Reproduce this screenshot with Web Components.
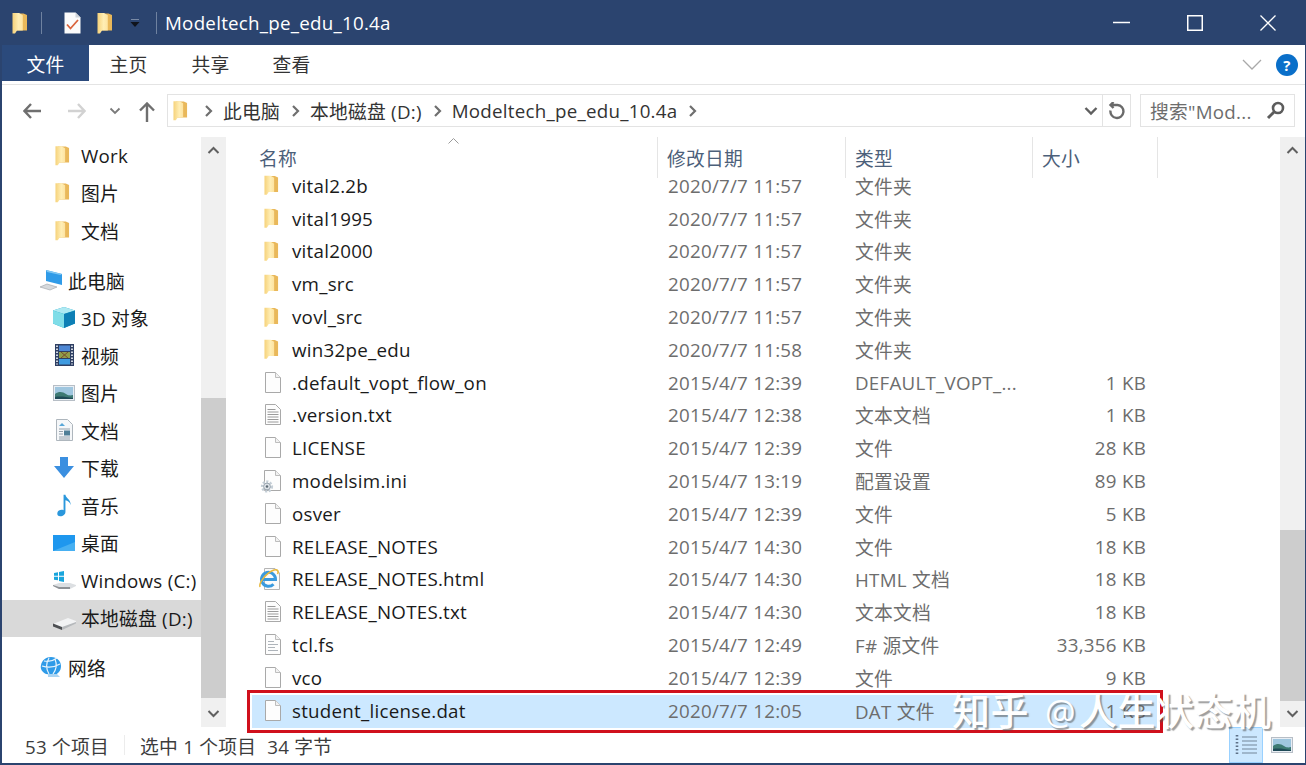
<!DOCTYPE html>
<html lang="zh">
<head>
<meta charset="utf-8">
<title>Modeltech_pe_edu_10.4a</title>
<style>
  html, body { margin: 0; height: 100%; background: #fff; }
  body { font: 18.75px "Open Sans", "Noto Sans CJK SC", sans-serif; letter-spacing: .25px; color: #1a1a1a; overflow: hidden; }
</style>
</head>
<body>
<fx-window>
  <fx-titlebar>Modeltech_pe_edu_10.4a</fx-titlebar>
  <fx-ribbon></fx-ribbon>
  <fx-address></fx-address>
  <fx-main>
    <fx-nav slot="nav">
      <fx-nav-item icon="folder" level="2">Work</fx-nav-item>
      <fx-nav-item icon="folder" level="2">图片</fx-nav-item>
      <fx-nav-item icon="folder" level="2">文档</fx-nav-item>
      <fx-nav-item icon="pc" level="1" gap>此电脑</fx-nav-item>
      <fx-nav-item icon="cube" level="2">3D 对象</fx-nav-item>
      <fx-nav-item icon="film" level="2">视频</fx-nav-item>
      <fx-nav-item icon="picture" level="2">图片</fx-nav-item>
      <fx-nav-item icon="document" level="2">文档</fx-nav-item>
      <fx-nav-item icon="download" level="2">下载</fx-nav-item>
      <fx-nav-item icon="music" level="2">音乐</fx-nav-item>
      <fx-nav-item icon="desktop" level="2">桌面</fx-nav-item>
      <fx-nav-item icon="windrive" level="2">Windows (C:)</fx-nav-item>
      <fx-nav-item icon="drive" level="2" selected>本地磁盘 (D:)</fx-nav-item>
      <fx-nav-item icon="network" level="1" gap>网络</fx-nav-item>
    </fx-nav>
    <fx-scrollbar slot="nav-scroll" before="235" thumb="300" after="0"></fx-scrollbar>
    <fx-list slot="list">
      <fx-file-row icon="folder" date="2020/7/7 11:57" type="文件夹">vital2.2b</fx-file-row>
      <fx-file-row icon="folder" date="2020/7/7 11:57" type="文件夹">vital1995</fx-file-row>
      <fx-file-row icon="folder" date="2020/7/7 11:57" type="文件夹">vital2000</fx-file-row>
      <fx-file-row icon="folder" date="2020/7/7 11:57" type="文件夹">vm_src</fx-file-row>
      <fx-file-row icon="folder" date="2020/7/7 11:57" type="文件夹">vovl_src</fx-file-row>
      <fx-file-row icon="folder" date="2020/7/7 11:58" type="文件夹">win32pe_edu</fx-file-row>
      <fx-file-row icon="file" date="2015/4/7 12:39" type="DEFAULT_VOPT_..." size="1 KB">.default_vopt_flow_on</fx-file-row>
      <fx-file-row icon="text" date="2015/4/7 12:38" type="文本文档" size="1 KB">.version.txt</fx-file-row>
      <fx-file-row icon="file" date="2015/4/7 12:39" type="文件" size="28 KB">LICENSE</fx-file-row>
      <fx-file-row icon="ini" date="2015/4/7 13:19" type="配置设置" size="89 KB">modelsim.ini</fx-file-row>
      <fx-file-row icon="file" date="2015/4/7 12:39" type="文件" size="5 KB">osver</fx-file-row>
      <fx-file-row icon="file" date="2015/4/7 14:30" type="文件" size="18 KB">RELEASE_NOTES</fx-file-row>
      <fx-file-row icon="ie" date="2015/4/7 14:30" type="HTML 文档" size="18 KB">RELEASE_NOTES.html</fx-file-row>
      <fx-file-row icon="text" date="2015/4/7 14:30" type="文本文档" size="18 KB">RELEASE_NOTES.txt</fx-file-row>
      <fx-file-row icon="source" date="2015/4/7 12:49" type="F# 源文件" size="33,356 KB">tcl.fs</fx-file-row>
      <fx-file-row icon="file" date="2015/4/7 12:39" type="文件" size="9 KB">vco</fx-file-row>
      <fx-file-row icon="file" date="2020/7/7 12:05" type="DAT 文件" size="1 KB" selected>student_license.dat</fx-file-row>
    </fx-list>
    <fx-scrollbar slot="list-scroll" before="367" thumb="171" after="0"></fx-scrollbar>
  </fx-main>
  <fx-status></fx-status>
</fx-window>

<script>
const FOLDER = `<svg viewBox="0 0 16 22"><defs><linearGradient id="f" x1="0" x2="1"><stop offset="0" stop-color="#f6d27a"/><stop offset=".6" stop-color="#ffeeb5"/><stop offset="1" stop-color="#fde3a0"/></linearGradient></defs><path d="M3 1.500h8.500l3.500 1.500v15.500H4z" fill="#e9b85a"/><path d="M.5 1h6.500l3.800 2.200v15.300H5L3 21.500H.5z" fill="url(#f)"/></svg>`

const PAGE = 'M1.500 1.500h10l5 5v15h-15z'
const pageIcon = extra => `<svg viewBox="0 0 18 23"><path d="${PAGE}" fill="#fdfdfd" stroke="#a9a9a9"/><path d="M11.500 1.500v5h5" fill="#f1f1f1" stroke="#bdbdbd"/>${extra || ''}</svg>`

const ICONS = {
  folder: FOLDER,
  file: pageIcon(),
  text: `<svg viewBox="0 0 18 23"><path d="${PAGE}" fill="#fdfdfd" stroke="#a9a9a9"/><path d="M3.500 6.500h8M3.500 9h11M3.500 11.500h11M3.500 14h11M3.500 16.500h11M3.500 19h11" stroke="#9a9a9a"/></svg>`,
  source: pageIcon('<path d="M4 8.500h6M4 11.500h10M4 14.500h7M4 17.500h10" stroke="#aeb4ba" stroke-width="1.200"/>'),
  ini: `<svg viewBox="0 0 24 24"><path d="M6.500 1.500h11l5 5v15h-16z" fill="#fdfdfd" stroke="#a9a9a9"/><path d="M17.500 1.500v5h5" fill="#f1f1f1" stroke="#bdbdbd"/><circle cx="9" cy="17.500" r="4.600" fill="none" stroke="#c4ced6" stroke-width="3" stroke-dasharray="2 1.400"/><circle cx="9" cy="17.500" r="3.400" fill="#dde3e8" stroke="#9aa5af"/><circle cx="9" cy="17.500" r="1.300" fill="#5d6a75"/></svg>`,
  ie: `<svg viewBox="0 0 24 24"><path d="M7.500 1.500h10.500l4.500 4.500v16.500H7.500z" fill="#fbfbfb" stroke="#b5b5b5"/><path d="M5 12.500h13.500a7 7 0 1 0-2 4.700" fill="none" stroke="#3a9ade" stroke-width="3"/><path d="M3 20c-1.500-4 6-14 14-17 4-1 5 1.500 3.500 4" fill="none" stroke="#e8b83c" stroke-width="1.600"/></svg>`,
  doccheck: `<svg viewBox="0 0 17 22"><path d="M.5.500h11l5 5v16H.5z" fill="#fbfbfb"/><path d="M11.500.5v5h5" fill="#cfd4da"/><path d="M3 12.500l3.500 4L14 8" fill="none" stroke="#d9633c" stroke-width="1.800"/></svg>`,
  pc: `<svg viewBox="0 0 24 22"><path d="M7 1l16 4v11L7 12z" fill="#2f9be8"/><path d="M7 1l16 4-1.500 1L8 3z" fill="#7fc7f3"/><path d="M1 18l7-3 10 3-7 3z" fill="#d6d9dc" stroke="#9aa0a6" stroke-width=".6"/></svg>`,
  cube: `<svg viewBox="0 0 23 21"><path d="M11 0l11 3.500v13L11 21 0 16.500v-13z" fill="#14a3c7"/><path d="M11 0l11 3.500L11 7 0 3.500z" fill="#aee9f2"/><path d="M0 3.500L11 7v14L0 16.500z" fill="#7fdde8"/><path d="M11 7l11-3.500v13L11 21z" fill="#0d7fb5"/></svg>`,
  film: `<svg viewBox="0 0 19 22"><rect width="19" height="22" fill="#2f3f63"/><path d="M2 1.500v19M17 1.500v19" stroke="#cfd6e0" stroke-width="2" stroke-dasharray="1.500 1.500"/><rect x="4" y="1.500" width="11" height="5.500" fill="#4d87d4"/><rect x="4" y="8" width="11" height="6" fill="#8f9d4a"/><rect x="4" y="15" width="11" height="5.500" fill="#3f9be0"/><path d="M6 8l7 6M13 8l-7 6" stroke="#7a4d2c"/></svg>`,
  picture: `<svg viewBox="0 0 22 16"><rect x=".5" y=".5" width="21" height="15" fill="#e8eef4" stroke="#b7bec6"/><rect x="2" y="2" width="18" height="12" fill="#9fc6df"/><path d="M2 9c4-3 8-2 11 0s5 1.500 7 1v4H2z" fill="#3d7a73"/><path d="M2 12c5-1 11 0 18 1v1H2z" fill="#1f4a57"/></svg>`,
  document: `<svg viewBox="0 0 17 22"><path d="M.5.500h11l5 5v16H.5z" fill="#f5f7f9" stroke="#aeb6bd"/><path d="M3 10h11M3 18h11M3 20h11" stroke="#94a1ac"/><rect x="8" y="11.500" width="6" height="5" fill="#4f7f97"/><path d="M3 12.500h4M3 15h4" stroke="#94a1ac"/><path d="M3 7l3-3 3 3z" fill="#59a7d8"/></svg>`,
  download: `<svg viewBox="0 0 20 21"><path d="M6 0h8v9h6L10 21 0 9h6z" fill="#3b8fe0"/></svg>`,
  music: `<svg viewBox="0 0 16 24"><path d="M7 1h2c.5 4 6 5 5.500 11-.8-3-3-4.500-5.500-5v12.500c0 2.500-2.500 4.500-5.500 4.500S0 22 .5 20c.6-2.300 3.700-3.500 6.500-2.500z" fill="#2a97dc"/></svg>`,
  desktop: `<svg viewBox="0 0 22 16"><rect width="22" height="16" fill="#1e97ee"/><path d="M0 16L22 7v9z" fill="#47b0f2"/></svg>`,
  windrive: `<svg viewBox="0 0 23 18"><path d="M0 14l6-2h11l6 2v1l-6 3H6L0 15z" fill="#dcdfe2"/><path d="M0 15l6 3h11v-2H6L0 14z" fill="#8e9296"/><path d="M1 2l4-.8v3.600H1zM6 1l5-1v4.800H6zM1 5.800h4v3.500l-4-.6zM6 5.800h5V11l-5-1z" fill="#19a5dc"/></svg>`,
  drive: `<svg viewBox="0 0 23 12"><path d="M0 6l15-6 8 3v2L8 11 0 8z" fill="#f2f3f4"/><path d="M0 5.500l9 3.500v3L0 8.500z" fill="#4d4f52"/><path d="M9 9l14-5v1.500L9 12z" fill="#b6b9bc"/></svg>`,
  network: `<svg viewBox="0 0 23 22"><path d="M12 0c6 0 10 4 10 9s-3 8-7 9l-8-1C3 15 1 12 2 8c1-5 5-8 10-8z" fill="#2f9be8"/><path d="M5 4c4 1 9 0 13-3M3 9c6 2 13 1 18-2M10 1C7 6 7 12 10 17M16 2c2 5 1 11-2 15" stroke="#e8f4fc" stroke-width="1.200" fill="none"/><path d="M9 17h9l3 3H9z" fill="#a9d4f3"/></svg>`,
  details: `<svg viewBox="0 0 22 20"><path d="M7 2h15M7 6h15M7 10h15M7 14h15M7 18h15" stroke="#73859a" stroke-width="1.100"/><path d="M2 0v20" stroke="#5e7187" stroke-width="2.600" stroke-dasharray="1.600 1.900"/></svg>`
}

class FxIcon extends HTMLElement {
  connectedCallback () {
    const w = this.getAttribute('w') || 18
    const h = this.getAttribute('h') || 22
    this.attachShadow({ mode: 'open' }).innerHTML = `
      <style>
        :host { display: flex; align-items: center; justify-content: center; flex: none; width: ${w}px; height: ${h}px; }
        svg { display: block; width: 100%; height: 100%; }
      </style>
      ${ICONS[this.getAttribute('name')] || ''}`
  }
}

class FxWindow extends HTMLElement {
  constructor () {
    super()
    this.attachShadow({ mode: 'open' }).innerHTML = `
      <style>
        :host {
          display: grid;
          grid-template-rows: 45px 40px 50px 600px 28px;
          position: relative;
          box-sizing: border-box;
          width: 1306px;
          height: 765px;
          border: solid #2b446f;
          border-width: 0 1.5px 2px 2px;
          background: #fff;
          overflow: hidden;
        }
        .mark {
          position: absolute;
          left: 950px;
          top: 685px;
          font: 500 38px/48px "Noto Sans CJK SC", sans-serif;
          letter-spacing: .5px;
          color: #fff;
          white-space: nowrap;
          text-shadow: 2px 2px 1px rgba(80, 80, 80, .55);
        }
        .at { font: 500 34px/48px "Open Sans", sans-serif; margin: 0 3px 0 16px; }
        .hilite {
          position: absolute;
          left: 245px;
          top: 690px;
          width: 916px;
          height: 43px;
          box-sizing: border-box;
          border: 3px solid #d0101c;
        }
      </style>
      <slot></slot>
      <div class="hilite"></div>
      <div class="mark">知乎<span class="at">@</span>人生状态机</div>`
  }
}

class FxTitlebar extends HTMLElement {
  constructor () {
    super()
    this.attachShadow({ mode: 'open' }).innerHTML = `
      <style>
        :host {
          display: flex;
          align-items: center;
          margin: 0 -2px 0 -2px;
          padding-left: 12px;
          background: #2b446f;
          color: #fff;
        }
        .sep { width: 1px; height: 22px; background: #6f82a0; flex: none; }
        .title { margin-left: 8px; flex: 1; }
        .ctl { flex: none; width: 73px; display: flex; justify-content: center; }
        svg { display: block; }
      </style>
      <fx-icon name="folder" w="16" h="22"></fx-icon>
      <span class="sep" style="margin-left:13px"></span>
      <fx-icon name="doccheck" w="17" h="22" style="margin-left:22px"></fx-icon>
      <fx-icon name="folder" w="16" h="22" style="margin-left:16px"></fx-icon>
      <svg width="12" height="8" viewBox="0 0 12 8" style="margin-left:16px"><path d="M2 0h8" stroke="#c8d0dc"/><path d="M1.500 3h9L6 8z" fill="#10141c"/></svg>
      <span class="sep" style="margin-left:15px"></span>
      <span class="title"><slot></slot></span>
      <span class="ctl"><svg width="17" height="17" viewBox="0 0 17 17"><path d="M0 8.500h17" stroke="#fff" stroke-width="1.500"/></svg></span>
      <span class="ctl"><svg width="16" height="16" viewBox="0 0 16 16"><rect x=".75" y=".75" width="14.500" height="14.500" fill="none" stroke="#fff" stroke-width="1.500"/></svg></span>
      <span class="ctl" style="margin-right:3px"><svg width="16" height="16" viewBox="0 0 16 16"><path d="M.5.500l15 15M15.500.500l-15 15" stroke="#fff" stroke-width="1.300"/></svg></span>`
  }
}

class FxRibbon extends HTMLElement {
  constructor () {
    super()
    this.attachShadow({ mode: 'open' }).innerHTML = `
      <style>
        :host {
          display: flex;
          align-items: flex-start;
          box-sizing: border-box;
          border-bottom: 1px solid #e4e4e4;
          color: #333;
        }
        span { display: flex; align-items: center; justify-content: center; height: 36px; width: 79px; margin-left: 3px; }
        .file { width: 87px; margin: 0; background: #2b4a7c; color: #fff; }
        .file + span { margin-left: 0; }
        .right { margin-left: auto; display: flex; align-items: center; height: 39px; }
        .help {
          width: 22px; height: 22px; margin: 0 7px 0 14px; border-radius: 50%;
          background: #0a6fc9; color: #fff; font-size: 15px; font-weight: 700;
        }
      </style>
      <span class="file">文件</span>
      <span>主页</span>
      <span>共享</span>
      <span style="margin-left:2px">查看</span>
      <div class="right">
        <svg width="20" height="11" viewBox="0 0 20 11"><path d="M1 1l9 9 9-9" fill="none" stroke="#a9a9a9" stroke-width="1.300"/></svg>
        <span class="help">?</span>
      </div>`
  }
}

class FxAddress extends HTMLElement {
  constructor () {
    super()
    const chev = `<svg width="30" height="14" viewBox="0 0 30 14"><path d="M13 2l5 5-5 5" fill="none" stroke="#6f6f6f" stroke-width="2.200"/></svg>`
    this.attachShadow({ mode: 'open' }).innerHTML = `
      <style>
        :host { display: flex; align-items: flex-start; padding-top: 9px; color: #333; }
        svg { display: block; flex: none; }
        .nav { width: 165px; flex: none; display: flex; align-items: center; height: 33px; }
        .btn { display: flex; justify-content: center; flex: none; }
        .box {
          display: flex; align-items: center; box-sizing: border-box; height: 33px;
          border: 1px solid #e3e3e3;
        }
        .path { width: 964px; flex: none; padding-left: 5px; }
        .end { margin-left: auto; display: flex; align-items: center; height: 100%; }
        .refresh { border-left: 1px solid #e3e3e3; height: 100%; width: 27px; display: flex; align-items: center; justify-content: center; }
        .search { width: 155px; flex: none; margin-left: 9px; padding: 0 9px; color: #6d6d6d; justify-content: space-between; }
      </style>
      <div class="nav">
        <span class="btn" style="width:44px;margin-left:8px"><svg width="18" height="16" viewBox="0 0 18 16"><path d="M8 1L1.500 8 8 15M2 8h16" fill="none" stroke="#6f6f6f" stroke-width="2.400"/></svg></span>
        <span class="btn" style="width:45px"><svg width="18" height="16" viewBox="0 0 18 16"><path d="M10 1l6.500 7-6.500 7M16 8H0" fill="none" stroke="#d2d2d2" stroke-width="2.400"/></svg></span>
        <span class="btn" style="width:32px"><svg width="12" height="8" viewBox="0 0 12 8"><path d="M1.500 1.500L6 6l4.500-4.500" fill="none" stroke="#7a7a7a" stroke-width="1.800"/></svg></span>
        <span class="btn" style="width:32px"><svg width="16" height="20" viewBox="0 0 16 20" style="margin-top:3px"><path d="M1 8.500l7-7 7 7M8 2v18" fill="none" stroke="#6f6f6f" stroke-width="2.400"/></svg></span>
      </div>
      <div class="box path">
        <fx-icon name="folder" w="15" h="21"></fx-icon>
        <span style="width:5px"></span>
        ${chev}<span>此电脑</span>
        ${chev}<span>本地磁盘 (D:)</span>
        ${chev}<span>Modeltech_pe_edu_10.4a</span>
        ${chev}
        <span class="end">
          <svg width="14" height="10" viewBox="0 0 14 10" style="margin-right:4px"><path d="M1.500 2L7 7.500 12.500 2" fill="none" stroke="#5f5f5f" stroke-width="2.400"/></svg>
          <span class="refresh"><svg width="17" height="18" viewBox="0 0 17 18"><path d="M3 3h6.500a6.500 6.500 0 1 1-7 5.500M5.500 0L2.500 3l3 3" fill="none" stroke="#6a6a6a" stroke-width="2.400"/></svg></span>
        </span>
      </div>
      <div class="box search">
        <span>搜索"Mod...</span>
        <svg width="19" height="19" viewBox="0 0 19 19"><circle cx="12" cy="7" r="5" fill="none" stroke="#5c5c5c" stroke-width="2.600"/><path d="M8 11l-6 6" stroke="#5c5c5c" stroke-width="3"/></svg>
      </div>`
  }
}

class FxMain extends HTMLElement {
  constructor () {
    super()
    this.attachShadow({ mode: 'open' }).innerHTML = `
      <style>
        :host { display: grid; grid-template-columns: 199px 25px 1fr 25px; padding-bottom: 8px; padding-top: 2px; box-sizing: border-box; height: 600px; overflow: hidden; }
      </style>
      <slot name="nav"></slot>
      <slot name="nav-scroll"></slot>
      <slot name="list"></slot>
      <slot name="list-scroll"></slot>`
  }
}

class FxNav extends HTMLElement {
  constructor () {
    super()
    this.attachShadow({ mode: 'open' }).innerHTML = `
      <style>:host { display: block; padding-top: .25px; }</style>
      <slot></slot>`
  }
}

const NAV_ICON = {
  folder: [15, 21], pc: [24, 22], cube: [23, 21], film: [19, 22], picture: [22, 16],
  document: [17, 22], download: [20, 21], music: [15, 24], desktop: [22, 16],
  windrive: [23, 18], drive: [23, 12], network: [23, 22]
}
const NAV_ICON_STYLE = { folder: 'padding-right:8px', drive: 'padding-top:12px;padding-right:5px' }

class FxNavItem extends HTMLElement {
  connectedCallback () {
    const icon = this.getAttribute('icon')
    const top = this.getAttribute('level') === '1'
    const label = top ? '' : (NAV_ICON_STYLE[icon] || 'padding-right:5px')
    this.attachShadow({ mode: 'open' }).innerHTML = `
      <style>
        :host {
          display: flex;
          align-items: center;
          box-sizing: border-box;
          height: 37.5px;
          padding-left: ${top ? 37 : 50}px;
          padding-bottom: 2px;
          white-space: nowrap;
          overflow: hidden;
        }
        :host([gap]) { margin-top: 12.5px; }
        :host([selected]) { background: #d9d9d9; }
        .ic { box-sizing: border-box; width: 29px; flex: none; display: flex; justify-content: ${top ? 'flex-start' : 'center'}; }
      </style>
      <span class="ic" style="${label}"><fx-icon name="${icon}" w="${NAV_ICON[icon][0]}" h="${NAV_ICON[icon][1]}"></fx-icon></span>
      <slot></slot>`
  }
}

class FxScrollbar extends HTMLElement {
  connectedCallback () {
    const before = this.getAttribute('before')
    const thumb = this.getAttribute('thumb')
    this.attachShadow({ mode: 'open' }).innerHTML = `
      <style>
        :host { display: flex; flex-direction: column; height: 590px; background: #f0f0f0; }
        .btn { height: 26px; flex: none; display: flex; align-items: center; justify-content: center; }
        .before { height: ${before}px; flex: none; }
        .thumb { height: ${thumb}px; flex: none; background: #cdcdcd; }
        .rest { flex: 1; }
      </style>
      <div class="btn"><svg width="13" height="8" viewBox="0 0 13 8"><path d="M1.500 7l5-5 5 5" fill="none" stroke="#606060" stroke-width="2"/></svg></div>
      <div class="before"></div>
      <div class="thumb"></div>
      <div class="rest"></div>
      <div class="btn"><svg width="13" height="8" viewBox="0 0 13 8"><path d="M1.500 1l5 5 5-5" fill="none" stroke="#606060" stroke-width="2"/></svg></div>`
  }
}

class FxList extends HTMLElement {
  constructor () {
    super()
    this.attachShadow({ mode: 'open' }).innerHTML = `
      <style>
        :host { display: block; padding-left: 26px; }
        .head {
          display: grid;
          grid-template-columns: 406px 188px 187px 125px;
          width: 906px;
          height: 41px;
          margin-bottom: -8px;
          position: relative;
          color: #4c607a;
        }
        .head div { display: flex; align-items: center; box-sizing: border-box; padding-left: 9px; border-right: 1px solid #e5e5e5; }
        .head div:first-child { padding-left: 7px; }
        .sort { position: absolute; left: 196px; top: 1px; }
      </style>
      <div class="head">
        <div>名称</div><div>修改日期</div><div>类型</div><div>大小</div>
        <svg class="sort" width="11" height="6" viewBox="0 0 11 6"><path d="M.5 5.500l5-5 5 5" fill="none" stroke="#9a9a9a"/></svg>
      </div>
      <slot></slot>`
  }
}

class FxFileRow extends HTMLElement {
  connectedCallback () {
    const icon = this.getAttribute('icon')
    const size = { folder: [15, 22], ini: [24, 24], ie: [24, 24] }[icon] || [18, 23]
    const left = { ini: 6, ie: 5 }[icon] || 12
    this.attachShadow({ mode: 'open' }).innerHTML = `
      <style>
        :host {
          display: grid;
          grid-template-columns: 405px 188px 187px 125px;
          width: 905px;
          height: 32.8px;
          box-sizing: border-box;
          padding-bottom: 2px;
          align-items: center;
          color: #6d6d6d;
          white-space: nowrap;
        }
        :host([selected]) { background: #cce8ff; }
        .name { display: flex; align-items: center; color: #1a1a1a; padding-left: ${left}px; }
        .ic { width: ${40 - left}px; flex: none; }
        .date { padding-left: 11px; }
        .type { padding-left: 10px; }
        .size { text-align: right; padding-right: 11px; }
      </style>
      <div class="name"><span class="ic"><fx-icon name="${icon}" w="${size[0]}" h="${size[1]}"></fx-icon></span><slot></slot></div>
      <div class="date">${this.getAttribute('date')}</div>
      <div class="type">${this.getAttribute('type')}</div>
      <div class="size">${this.getAttribute('size') || ''}</div>`
  }
}

class FxStatus extends HTMLElement {
  constructor () {
    super()
    this.attachShadow({ mode: 'open' }).innerHTML = `
      <style>
        :host { display: flex; align-items: center; padding-left: 23px; padding-bottom: 8px; box-sizing: border-box; color: #3c3c3c; }
        .sep { width: 1px; height: 20px; background: #ececec; margin: 0 15px; }
        .views { margin-left: auto; display: flex; align-items: center; margin-right: 12.5px; }
        .on {
          box-sizing: border-box; width: 34px; height: 36px;
          display: flex; align-items: center; justify-content: center;
          background: #cce8ff; border: 1px solid #99d1ff;
        }
      </style>
      <span>53 个项目</span>
      <span class="sep"></span>
      <span>选中 1 个项目</span>
      <span style="margin-left:11px">34 字节</span>
      <div class="views">
        <span class="on"><fx-icon name="details" w="22" h="20"></fx-icon></span>
        <fx-icon name="picture" w="22" h="16" style="margin-left:8px"></fx-icon>
      </div>`
  }
}

customElements.define('fx-icon', FxIcon)
customElements.define('fx-window', FxWindow)
customElements.define('fx-titlebar', FxTitlebar)
customElements.define('fx-ribbon', FxRibbon)
customElements.define('fx-address', FxAddress)
customElements.define('fx-main', FxMain)
customElements.define('fx-nav', FxNav)
customElements.define('fx-nav-item', FxNavItem)
customElements.define('fx-scrollbar', FxScrollbar)
customElements.define('fx-list', FxList)
customElements.define('fx-file-row', FxFileRow)
customElements.define('fx-status', FxStatus)
</script>
</body>
</html>
